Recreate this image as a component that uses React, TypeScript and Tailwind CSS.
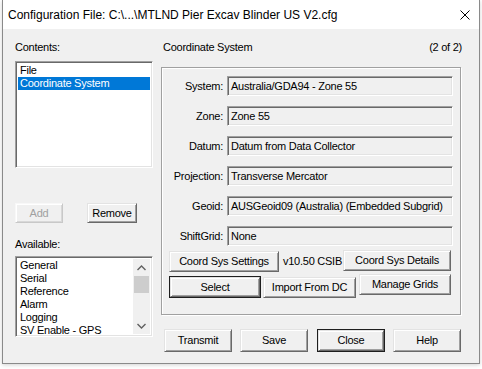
import React from "react";

const font = "font-['Liberation_Sans',Arial,sans-serif] text-[11px] leading-[13px] tracking-[-0.25px] text-black";

const raised =
  "border border-t-[#e3e3e3] border-l-[#e3e3e3] border-r-[#696969] border-b-[#696969] shadow-[inset_1px_1px_#fff,inset_-1px_-1px_#a0a0a0] bg-[#f0f0f0]";
const sunken =
  "border border-t-[#a0a0a0] border-l-[#a0a0a0] border-r-white border-b-white shadow-[inset_1px_1px_#696969,inset_-1px_-1px_#e3e3e3]";

function Btn({ label, className = "", disabled = false }: { label: string; className?: string; disabled?: boolean }) {
  return (
    <div
      className={`${
        disabled
          ? "border border-t-[#f8f8f8] border-l-[#f8f8f8] border-r-[#c8c8c8] border-b-[#c8c8c8] shadow-[inset_1px_1px_#fff,inset_-1px_-1px_#d8d8d8] bg-[#f0f0f0] text-[#a0a0a0]"
          : raised
      } flex items-center justify-center shrink-0 ${className}`}
    >
      {label}
    </div>
  );
}

function DefBtn({ label, className = "" }: { label: string; className?: string }) {
  return (
    <div className={`border border-[#1e1e1e] flex shrink-0 ${className}`}>
      <div className={`${raised} flex-1 flex items-center justify-center`}>{label}</div>
    </div>
  );
}

function Field({ label, value }: { label: string; value: string }) {
  return (
    <div className="flex items-center h-[20px]">
      <div className="w-[61px] text-right">{label}</div>
      <div className={`${sunken} ml-[4px] w-[226px] h-[20px] flex items-center pl-[3px] bg-[#f0f0f0]`}>{value}</div>
    </div>
  );
}

export default function App() {
  const available = ["General", "Serial", "Reference", "Alarm", "Logging", "SV Enable - GPS"];
  return (
    <div className={`w-[482px] h-[369px] bg-white ${font}`}>
      <div className="ml-[2px] w-[478px] h-[364px] border-x border-b border-[#8a8a8a] flex flex-col shadow-[0_1px_4px_rgba(0,0,0,0.18)]">
        {/* title bar */}
        <div className="h-[29px] bg-white flex items-center justify-between pl-[5px]">
          <span className="font-['Liberation_Sans',Arial,sans-serif] text-[12px] tracking-[0px] leading-[16px] mt-[1px]">
            Configuration File: C:\...\MTLND Pier Excav Blinder US V2.cfg
          </span>
          <svg width="10" height="10" viewBox="0 0 10 10" className="mr-[9px] mt-[1px]">
            <path d="M0.5 0.5 L9.5 9.5 M9.5 0.5 L0.5 9.5" stroke="#000" strokeWidth="1" />
          </svg>
        </div>
        {/* body */}
        <div className="flex-1 bg-[#f0f0f0] flex pl-[12px]">
          {/* left column */}
          <div className="w-[138px] flex flex-col pt-[12px]">
            <div className="h-[13px]">Contents:</div>
            <div className={`${sunken} mt-[7px] h-[107px] bg-white p-[2px]`}>
              <div className="h-[13px] pl-[2px]">File</div>
              <div className="h-[13px] pl-[2px] bg-[#0078d7] text-white">Coordinate System</div>
            </div>
            <div className="mt-[35px] flex h-[20px]">
              <Btn label="Add" disabled className="w-[48px] h-[20px]" />
              <Btn label="Remove" className="ml-[24px] w-[50px] h-[20px]" />
            </div>
            <div className="mt-[15px] h-[13px]">Available:</div>
            <div className={`${sunken} mt-[5px] h-[81px] bg-white p-[2px] flex`}>
              <div className="flex-1 flex flex-col">
                {available.map((a) => (
                  <div key={a} className="h-[13px] pl-[2px] whitespace-nowrap">
                    {a}
                  </div>
                ))}
              </div>
              <div className="w-[17px] bg-[#f0f0f0] flex flex-col">
                <div className="h-[17px] flex items-center justify-center">
                  <svg width="9" height="6" viewBox="0 0 9 6">
                    <path d="M0.5 5 L4.5 1 L8.5 5" stroke="#606060" strokeWidth="1.4" fill="none" />
                  </svg>
                </div>
                <div className="h-[17px] bg-[#cdcdcd] mx-[1px]" />
                <div className="flex-1" />
                <div className="h-[17px] flex items-center justify-center">
                  <svg width="9" height="6" viewBox="0 0 9 6">
                    <path d="M0.5 1 L4.5 5 L8.5 1" stroke="#606060" strokeWidth="1.4" fill="none" />
                  </svg>
                </div>
              </div>
            </div>
          </div>
          {/* right column */}
          <div className="ml-[8px] w-[300px] flex flex-col pt-[12px]">
            <div className="h-[13px] flex justify-between pl-[2px] -mr-[1px]">
              <span>Coordinate System</span>
              <span>(2 of 2)</span>
            </div>
            <div className="mt-[13px] h-[248px] border border-[#a0a0a0] shadow-[inset_1px_1px_#fff,1px_1px_#fff] flex flex-col pt-[8px]">
              <div className="flex flex-col gap-[10px]">
                <Field label="System:" value="Australia/GDA94 - Zone 55" />
                <Field label="Zone:" value="Zone 55" />
                <Field label="Datum:" value="Datum from Data Collector" />
                <Field label="Projection:" value="Transverse Mercator" />
                <Field label="Geoid:" value="AUSGeoid09 (Australia) (Embedded Subgrid)" />
                <Field label="ShiftGrid:" value="None" />
              </div>
              <div className="mt-[5px] flex items-center pl-[7px] h-[21px]">
                <Btn label="Coord Sys Settings" className="w-[110px] h-[21px]" />
                <div className="ml-[4px] w-[60px] whitespace-nowrap">v10.50 CSIB</div>
                <Btn label="Coord Sys Details" className="w-[108px] h-[21px] -mt-[2px]" />
              </div>
              <div className="mt-[2px] flex items-start pl-[7px]">
                <DefBtn label="Select" className="mt-[2px] w-[92px] h-[22px]" />
                <Btn label="Import From DC" className="ml-[2px] mt-[3px] w-[93px] h-[21px]" />
                <Btn label="Manage Grids" className="ml-[3px] w-[92px] h-[21px]" />
              </div>
            </div>
            <div className="mt-[14px] flex pl-[3px]">
              <Btn label="Transmit" className="w-[68px] h-[23px]" />
              <Btn label="Save" className="ml-[8px] w-[68px] h-[23px]" />
              <DefBtn label="Close" className="ml-[9px] w-[68px] h-[23px]" />
              <Btn label="Help" className="ml-[8px] w-[68px] h-[23px]" />
            </div>
          </div>
        </div>
      </div>
    </div>
  );
}
